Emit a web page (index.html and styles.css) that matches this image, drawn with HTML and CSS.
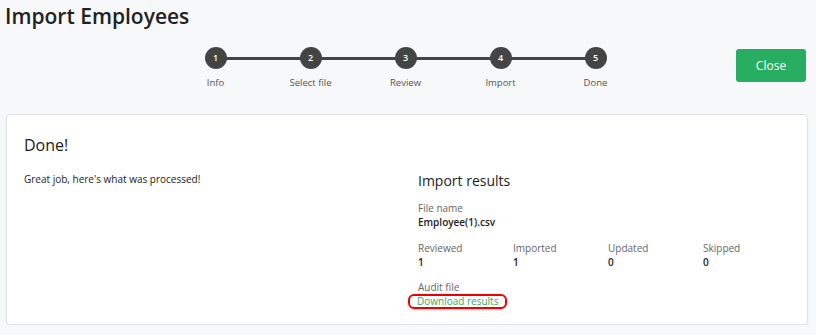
FILE: index.html
```html
<!DOCTYPE html>
<html lang="en">
  <head>
    <meta charset="UTF-8" />
    <meta name="viewport" content="width=device-width, initial-scale=1.0" />
    <title>Import Employees</title>
    <link rel="stylesheet" href="styles.css">
  </head>
  <body>
    <h1 class="title">Import Employees</h1>

    <div class="header">
      <div class="steps">
        <div class="step"><span class="dot">1</span><span class="label">Info</span></div>
        <div class="step"><span class="dot">2</span><span class="label">Select file</span></div>
        <div class="step"><span class="dot">3</span><span class="label">Review</span></div>
        <div class="step"><span class="dot">4</span><span class="label">Import</span></div>
        <div class="step"><span class="dot">5</span><span class="label">Done</span></div>
      </div>
      <button class="close">Close</button>
    </div>

    <div class="card">
      <h2 class="done">Done!</h2>
      <div class="cols">
        <div class="left">
          <p class="intro">Great job, here's what was processed!</p>
        </div>
        <div class="right">
          <h3 class="results">Import results</h3>
          <div class="field">
            <div class="key">File name</div>
            <div class="val">Employee(1).csv</div>
          </div>
          <div class="stats">
            <div class="field"><div class="key">Reviewed</div><div class="val">1</div></div>
            <div class="field"><div class="key">Imported</div><div class="val">1</div></div>
            <div class="field"><div class="key">Updated</div><div class="val">0</div></div>
            <div class="field"><div class="key">Skipped</div><div class="val">0</div></div>
          </div>
          <div class="field last">
            <div class="key">Audit file</div>
            <a class="download" href="#">Download results</a>
          </div>
        </div>
      </div>
    </div>
  </body>
</html>
```

FILE: styles.css
```css
body {
  margin: 0;
  background-color: #f7f8fa;
  font-family: "Open Sans", sans-serif;
  color: #222;
}

.title {
  margin: 0;
  padding: 2px 0 0 5px;
  font-size: 21px;
  font-weight: 600;
  line-height: 28px;
}

.header {
  display: flex;
  align-items: flex-start;
  height: 84px;
}

.steps {
  display: flex;
  margin: 17px 0 0 168px;
}

.step {
  position: relative;
  display: flex;
  flex-direction: column;
  align-items: center;
  width: 95px;
}

.step:not(:last-child)::after {
  content: "";
  position: absolute;
  top: 10px;
  left: 47px;
  width: 95px;
  height: 3px;
  background-color: #444;
}

.dot {
  position: relative;
  z-index: 1;
  width: 22px;
  height: 22px;
  border-radius: 50%;
  background-color: #444;
  color: #fff;
  font-size: 9px;
  font-weight: 600;
  line-height: 22px;
  text-align: center;
}

.label {
  margin-top: 7px;
  font-size: 9.5px;
  color: #555;
}

.close {
  margin: 19px 10px 0 auto;
  width: 70px;
  height: 33px;
  border: none;
  border-radius: 3px;
  background-color: #27ae60;
  color: #fff;
  font-family: "Open Sans", sans-serif;
  font-size: 12px;
}

.card {
  margin: 0 8px 0 6px;
  padding: 18px 17px 15px;
  background-color: #fff;
  border: 1px solid #dfe1e5;
  border-radius: 4px;
  box-shadow: 0 1px 2px rgba(0, 0, 0, 0.06);
}

.done {
  margin: 0;
  font-size: 16px;
  font-weight: 500;
  line-height: 24px;
}

.cols {
  display: grid;
  grid-template-columns: minmax(0, 1fr) minmax(0, 1fr);
  margin-top: 14px;
}

.intro {
  margin: 0;
  font-size: 10px;
  line-height: 16px;
}

.right {
  padding-left: 11px;
}

.results {
  margin: 0 0 10px;
  font-size: 14px;
  font-weight: 500;
  line-height: 20px;
}

.field {
  margin-bottom: 12px;
  font-size: 10px;
  line-height: 14px;
}

.field.last {
  margin-bottom: 0;
}

.key {
  color: #666;
}

.val {
  font-weight: 600;
}

.stats {
  display: grid;
  grid-template-columns: repeat(4, 95px);
}

.stats .field {
  margin-bottom: 11px;
}

.download {
  display: inline-block;
  margin-left: -10px;
  padding: 0 7px;
  border: 2px solid #e00;
  border-radius: 6px;
  color: #3aaa5c;
  line-height: 11px;
  text-decoration: none;
  box-shadow: 0 1px 3px rgba(0, 0, 0, 0.2);
}
```
